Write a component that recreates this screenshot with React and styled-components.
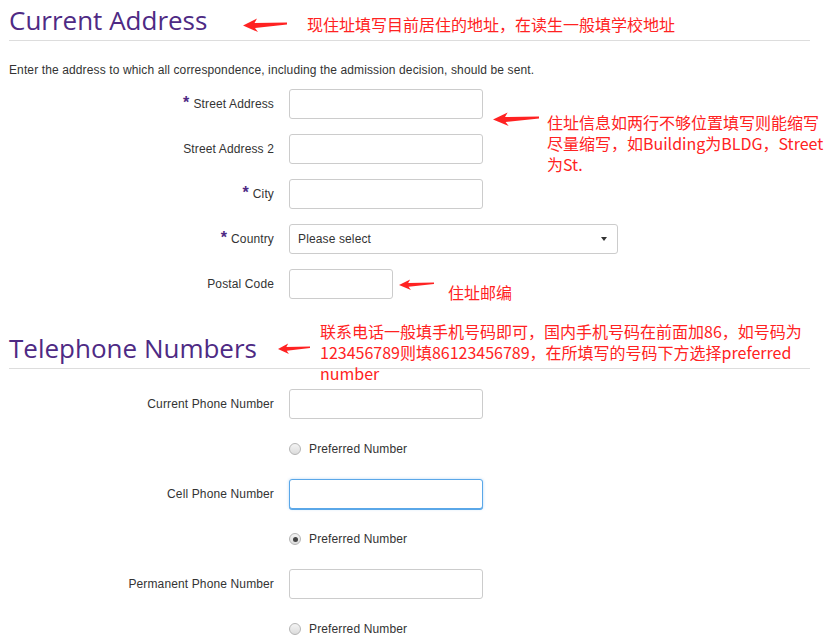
import React from "react";
import styled, { createGlobalStyle, css } from "styled-components";

const GlobalStyle = createGlobalStyle`
  body {
    margin: 0;
    background: #fff;
    font-family: "Liberation Sans", Arial, sans-serif;
  }
`;

const Page = styled.div`
  position: relative;
  width: 831px;
  min-height: 642px;
  box-sizing: border-box;
  padding: 0 21px 0 9px;
  overflow: hidden;
`;

const SectionTitle = styled.h2`
  margin: ${(p) => p.$top || 0}px 0 0;
  padding: 2px 0;
  font: 400 26px/36px "Open Sans", sans-serif;
  color: #4e2a84;
  border-bottom: 1px solid #dddddd;
`;

const Intro = styled.p`
  margin: 20px 0 10px;
  font-size: 12px;
  line-height: 18px;
  letter-spacing: 0.12px;
  color: #333;
`;

const FormGrid = styled.div`
  display: grid;
  grid-template-columns: 265px 1fr;
  column-gap: 15px;
  row-gap: 15px;
  grid-auto-rows: 30px;
  align-items: center;
  margin-top: ${(p) => p.$top || 0}px;
`;

const Label = styled.label`
  grid-column: 1;
  justify-self: end;
  display: flex;
  align-items: center;
  font-size: 12px;
  letter-spacing: 0.13px;
  color: #333;
`;

const Star = styled.span`
  color: #4e2a84;
  font-size: 16px;
  font-weight: bold;
  margin: 0 4px 3px 0;
`;

const TextInput = styled.input`
  grid-column: 2;
  width: ${(p) => p.$w || 194}px;
  height: 30px;
  box-sizing: border-box;
  border: 1px solid #cccccc;
  border-radius: 3px;
  background: #fff;
  outline: none;
  ${(p) =>
    p.$focus &&
    css`
      border-color: #5aa7e8;
      box-shadow: 0 1px 0 #5aa7e8, 0 0 3px rgba(90, 167, 232, 0.45);
    `}
`;

const Select = styled.div`
  grid-column: 2;
  width: 329px;
  height: 30px;
  box-sizing: border-box;
  border: 1px solid #cccccc;
  border-radius: 3px;
  padding: 0 10px 0 8px;
  display: flex;
  align-items: center;
  justify-content: space-between;
  font-size: 12px;
  letter-spacing: 0.13px;
  color: #333;
`;

const Caret = styled.span`
  width: 0;
  height: 0;
  border-left: 3px solid transparent;
  border-right: 3px solid transparent;
  border-top: 4px solid #333;
`;

const RadioRow = styled.div`
  grid-column: 2;
  display: flex;
  align-items: center;
  gap: 8px;
  font-size: 12px;
  letter-spacing: 0.13px;
  color: #333;
`;

const RadioDot = styled.span`
  width: 12px;
  height: 12px;
  box-sizing: border-box;
  border-radius: 50%;
  border: 1px solid #b5b5b5;
  background: linear-gradient(#f4f4f4, #dcdcdc);
  display: flex;
  align-items: center;
  justify-content: center;
  &::after {
    content: "";
    width: 5px;
    height: 5px;
    border-radius: 50%;
    background: ${(p) => (p.$checked ? "#444" : "transparent")};
  }
`;

const Note = styled.div`
  position: absolute;
  left: ${(p) => p.$x}px;
  top: ${(p) => p.$y}px;
  color: #ff2222;
  font: 400 16px/21px "Noto Sans CJK SC", sans-serif;
  white-space: nowrap;
`;

const ArrowSvg = styled.svg`
  position: absolute;
  left: ${(p) => p.$x}px;
  top: ${(p) => p.$y}px;
`;

const Arrow = ({ x, y, w = 44, h = 14 }) => (
  <ArrowSvg $x={x} $y={y} width={w} height={h} viewBox="0 0 44 14" preserveAspectRatio="none">
    <path d="M0 7.5 L14 0.5 L11.5 5 L44 4.5 L44 6.5 L12 10 L15 14 Z" fill="#ff2222" />
  </ArrowSvg>
);

const Field = ({ label, required, w, focus }) => (
  <>
    <Label>
      {required && <Star>*</Star>}
      {label}
    </Label>
    <TextInput $w={w} $focus={focus} />
  </>
);

const Preferred = ({ checked }) => (
  <RadioRow>
    <RadioDot $checked={checked} />
    Preferred Number
  </RadioRow>
);

const App = () => {
  return (
    <Page>
      <GlobalStyle />
      <SectionTitle>Current Address</SectionTitle>
      <Intro>
        Enter the address to which all correspondence, including the admission decision, should be sent.
      </Intro>
      <FormGrid>
        <Field label="Street Address" required />
        <Field label="Street Address 2" />
        <Field label="City" required />
        <Label>
          <Star>*</Star>Country
        </Label>
        <Select>
          Please select
          <Caret />
        </Select>
        <Field label="Postal Code" w={104} />
      </FormGrid>

      <SectionTitle $top={29}>Telephone Numbers</SectionTitle>
      <FormGrid $top={20}>
        <Field label="Current Phone Number" />
        <Preferred />
        <Field label="Cell Phone Number" focus />
        <Preferred checked />
        <Field label="Permanent Phone Number" />
        <Preferred />
      </FormGrid>

      <Arrow x={243} y={18} />
      <Note $x={307} $y={14}>现住址填写目前居住的地址，在读生一般填学校地址</Note>

      <Arrow x={493} y={112} w={46} />
      <Note $x={547} $y={112}>
        住址信息如两行不够位置填写则能缩写
        <br />
        尽量缩写，如Building为BLDG，Street
        <br />
        为St.
      </Note>

      <Arrow x={399} y={279} w={35} h={11} />
      <Note $x={448} $y={282}>住址邮编</Note>

      <Arrow x={278} y={343} w={32} h={11} />
      <Note $x={320} $y={321}>
        联系电话一般填手机号码即可，国内手机号码在前面加86，如号码为
        <br />
        123456789则填86123456789，在所填写的号码下方选择preferred
        <br />
        number
      </Note>
    </Page>
  );
};

export default App;
